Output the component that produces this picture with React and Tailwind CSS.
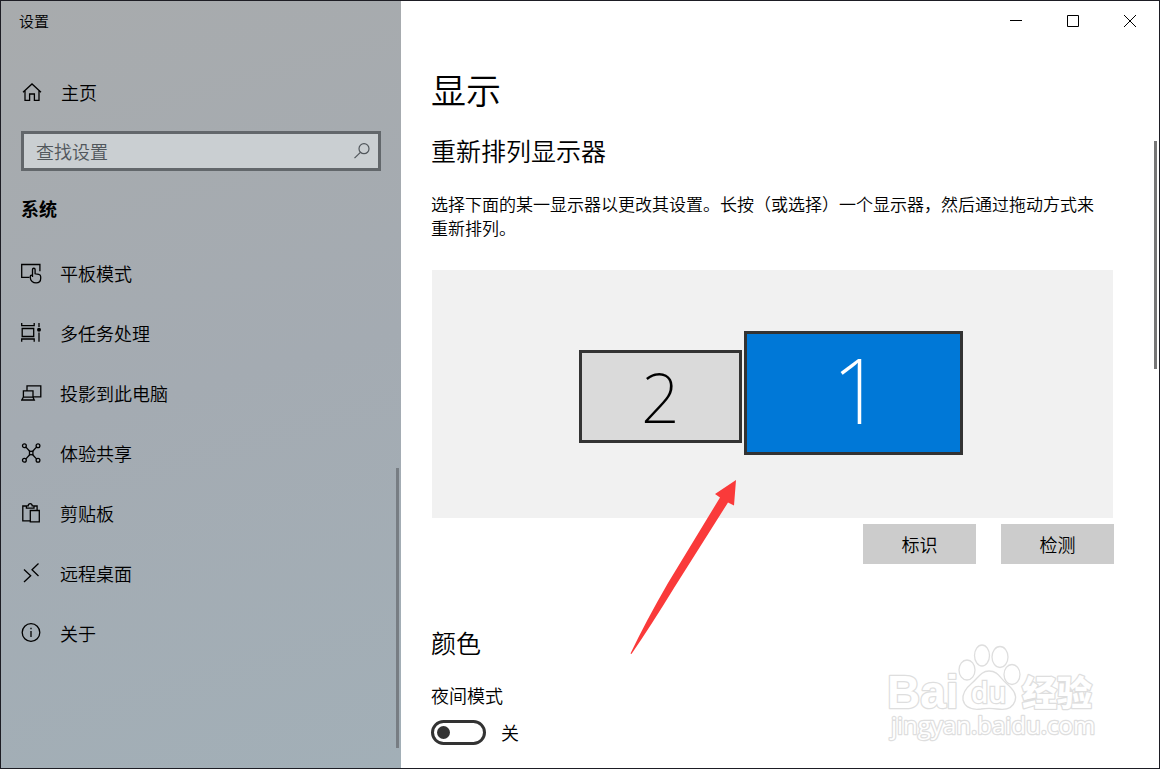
import React from 'react';

const iconProps = {
  width: 22,
  height: 22,
  viewBox: '0 0 22 22',
  fill: 'none',
  stroke: 'currentColor',
  strokeWidth: 1.3,
  'aria-hidden': true,
};

function HomeIcon() {
  return (
    <svg {...iconProps}>
      <path d="M2 11.200 11 3l9 8.200M4 9.600V19.300h4.600v-6.300h4.800v6.300H18V9.600" />
    </svg>
  );
}

function TabletIcon() {
  return (
    <svg {...iconProps}>
      <path d="M8.500 15.300H.7V2.500h18.200v6.800" />
      <path d="M11.500 15V7.600c0-1.800 2.600-1.800 2.600 0v4.200l3.600.6c1.400.3 2 1 2 2.300v1.600c0 2.700-1.800 4.600-4.600 4.600-3 0-5.800-2-5.800-5.200v-1.500c0-1.400 2.200-1.400 2.200 0" />
    </svg>
  );
}

function MultitaskIcon() {
  return (
    <svg {...iconProps}>
      <path d="M.7 1v2.700h12.500V1M1.200 6.500h11.500v8H1.200zM.7 19.700V17h12.500v2.700M18 1v4M18 10.500v9.200" />
      <circle cx="18" cy="7.800" r="2" fill="currentColor" stroke="none" />
    </svg>
  );
}

function ProjectIcon() {
  return (
    <svg {...iconProps}>
      <path d="M6 8.200V3.800h13.800v11h-7.500M2.400 8.800h9.600v6.400H2.400zM2.400 15.200l-1.700 2.800h12.600l-1.300-2.800" />
    </svg>
  );
}

function ShareIcon() {
  return (
    <svg {...iconProps}>
      <path d="M4.700 4.900l4 4.300M15.700 4.900l-4 4.300M4.700 17.100l4-4.300M15.700 17.100l-4-4.300" />
      <rect x="8.500" y="9.300" width="3.400" height="3.400" />
      <circle cx="3.400" cy="3.700" r="1.900" />
      <circle cx="17" cy="3.700" r="1.900" />
      <circle cx="3.400" cy="18.300" r="1.900" />
      <circle cx="17" cy="18.300" r="1.900" />
    </svg>
  );
}

function ClipboardIcon() {
  return (
    <svg {...iconProps}>
      <path d="M9 18.800H1.800V4h3.600M12.800 4h3.300v4M5.400 6.200V3.800h1.800c.2-3 3.800-3 4 0h1.800v2.400z" />
      <path d="M9.300 8.500h9v11.300h-9z" />
    </svg>
  );
}

function RemoteIcon() {
  return (
    <svg {...iconProps}>
      <path d="M3 7.500l6.700 6.200L3 20M17.500 1.500l-6.500 6.200 6.500 6.300" />
    </svg>
  );
}

function InfoIcon() {
  return (
    <svg {...iconProps}>
      <circle cx="10" cy="10.500" r="8.800" />
      <path d="M10 9v6M10 5.700v1.600" />
    </svg>
  );
}

const navItems = [
  { label: '平板模式', Icon: TabletIcon },
  { label: '多任务处理', Icon: MultitaskIcon },
  { label: '投影到此电脑', Icon: ProjectIcon },
  { label: '体验共享', Icon: ShareIcon },
  { label: '剪贴板', Icon: ClipboardIcon },
  { label: '远程桌面', Icon: RemoteIcon },
  { label: '关于', Icon: InfoIcon },
];

function Sidebar() {
  return (
    <aside className="relative flex w-[400px] shrink-0 flex-col bg-linear-165 from-[#a8abad] via-[#a4abb2] to-[#a2afb7] px-5">
      <div className="-ml-0.5 flex h-10 items-center text-[15px]">设置</div>
      <a href="#home" className="mt-[27px] flex h-12 items-center gap-[18px] text-[18px]">
        <HomeIcon />
        主页
      </a>
      <label className="mt-[15px] flex h-10 items-center border-3 border-[#62676b] bg-[#cacfd2] pr-[7px] pl-3">
        <input
          type="text"
          aria-label="查找设置"
          placeholder="查找设置"
          className="min-w-0 flex-1 bg-transparent text-[18px] leading-6 outline-none placeholder:text-[#50565b]"
        />
        <svg width="18" height="18" viewBox="0 0 18 18" fill="none" stroke="#50565b" strokeWidth="1.200" aria-hidden="true">
          <circle cx="11" cy="6.700" r="5" />
          <path d="M7.400 10.300L1.500 16.200" />
        </svg>
      </label>
      <h2 className="mt-[22px] text-[18px] leading-[30px] font-bold">系统</h2>
      <nav className="mt-5 flex flex-col">
        {navItems.map(({ label, Icon }) => (
          <a key={label} href="#section" className="flex h-[60px] items-center gap-[17px] text-[18px]">
            <Icon />
            {label}
          </a>
        ))}
      </nav>
      <div className="absolute right-[2px] bottom-5 h-[280px] w-[3px] bg-[#777d83]" />
    </aside>
  );
}

function WindowControls() {
  return (
    <div className="flex h-10 justify-end">
      <button type="button" aria-label="最小化" className="flex w-[57px] items-center justify-center">
        <svg width="13" height="13" viewBox="0 0 13 13" stroke="#000" fill="none" aria-hidden="true">
          <path d="M0 5.500h12" />
        </svg>
      </button>
      <button type="button" aria-label="最大化" className="flex w-[57px] items-center justify-center">
        <svg width="13" height="13" viewBox="0 0 13 13" stroke="#000" fill="none" aria-hidden="true">
          <path d="M.5.500h11v11H.5z" />
        </svg>
      </button>
      <button type="button" aria-label="关闭" className="flex w-[57px] items-center justify-center">
        <svg width="13" height="13" viewBox="0 0 13 13" stroke="#000" fill="none" aria-hidden="true">
          <path d="M0 0l12 12M12 0L0 12" />
        </svg>
      </button>
    </div>
  );
}

function DisplayArranger() {
  return (
    <div className="relative mx-px mt-[30px] flex h-[248px] items-center justify-center bg-[#f1f1f1]">
      <div className="relative h-[126px] w-[387px] font-['Noto_Sans'] font-extralight">
        <button
          type="button"
          className="absolute top-[19px] left-0 flex h-[93px] w-[163px] items-center justify-center border-3 border-[#333] bg-[#dadada] text-[68px] leading-none"
        >
          2
        </button>
        <button
          type="button"
          className="absolute top-0 left-[165px] flex h-[124px] w-[219px] items-center justify-center border-3 border-[#333] bg-[#0078d7] pb-2 pl-2 text-[90px] leading-none text-white"
        >
          1
        </button>
      </div>
      <svg
        className="pointer-events-none absolute top-[210px] left-[198px]"
        width="108"
        height="176"
        viewBox="0 0 108 176"
        aria-hidden="true"
      >
        <path d="M106 0L85 14l5 3.500L38 103Q16 141 .5 173.500L1.500 174Q22 144 44 108L98 22.500l6 3z" fill="#fa3a3a" />
      </svg>
    </div>
  );
}

function Watermark() {
  return (
    <svg
      className="pointer-events-none absolute right-[60px] bottom-5 font-['Open_Sans','Noto_Sans_CJK_SC',sans-serif]"
      width="212"
      height="106"
      viewBox="0 0 212 106"
      fill="#fff"
      stroke="#dedede"
      strokeWidth="1.300"
      aria-hidden="true"
    >
      <g strokeWidth="2.500" paintOrder="stroke" strokeLinejoin="round">
        <text x="0" y="66" fontSize="46" fontWeight="700" fontFamily="Liberation Sans">Bai</text>
        <text x="135" y="64" fontSize="35" fontWeight="900">经验</text>
        <text x="4" y="92" fontSize="24" fontWeight="500">jingyan.baidu.com</text>
      </g>
      <ellipse cx="80" cy="28" rx="8" ry="10" />
      <ellipse cx="95" cy="13.500" rx="7.500" ry="10.500" />
      <ellipse cx="113" cy="15" rx="8" ry="10.500" />
      <ellipse cx="125" cy="32.500" rx="8" ry="10" />
      <path d="M102 29c9 0 11 7 17 12 8 7 11 12 9 18-3 9-12 9-18 8-6-1-10-1-16 0-8 1-16-1-18-9-1-7 3-12 9-17 6-5 9-12 17-12z" />
      <text x="84" y="61" fontSize="28" fontWeight="600" strokeWidth="2.500" paintOrder="stroke">du</text>
    </svg>
  );
}

export default function App() {
  return (
    <div className="flex min-h-screen border border-[#1d1d24] bg-white font-['Noto_Sans_CJK_SC',sans-serif] font-[350] text-black">
      <Sidebar />
      <main className="relative min-w-0 flex-1 overflow-hidden">
        <WindowControls />
        <div className="flex flex-col pr-[45px] pl-[30px]">
          <h1 className="mt-[22px] text-[35px] leading-[52px]">显示</h1>
          <h2 className="mt-[17px] text-[25px] leading-9">重新排列显示器</h2>
          <p className="mt-6 pr-3 text-[17px] leading-6">
            选择下面的某一显示器以更改其设置。长按（或选择）一个显示器，然后通过拖动方式来重新排列。
          </p>
          <DisplayArranger />
          <div className="mt-[6px] flex justify-end gap-[25px]">
            <button type="button" className="h-10 w-[113px] bg-[#ccc] text-[18px]">标识</button>
            <button type="button" className="h-10 w-[113px] bg-[#ccc] text-[18px]">检测</button>
          </div>
          <h2 className="mt-[60px] text-[25px] leading-9">颜色</h2>
          <span id="night-label" className="mt-[23px] text-[18px] leading-6">夜间模式</span>
          <div className="mt-[13px] flex h-6 items-center gap-[15px]">
            <button
              type="button"
              role="switch"
              aria-checked="false"
              aria-labelledby="night-label"
              className="flex h-[25px] w-[55px] items-center rounded-full border-3 border-[#333] pl-[3px]"
            >
              <span className="size-[13px] rounded-full bg-[#333]" />
            </button>
            <span className="text-[18px] leading-6">关</span>
          </div>
        </div>
        <div className="absolute top-[140px] right-[2px] h-[228px] w-[3px] bg-[#777]" />
        <Watermark />
      </main>
    </div>
  );
}
